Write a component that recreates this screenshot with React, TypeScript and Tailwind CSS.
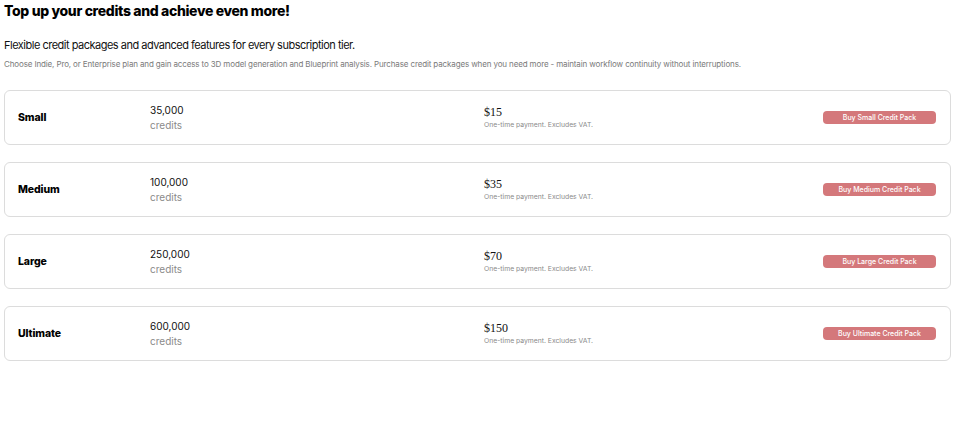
import React from "react";

const packs = [
  { name: "Small", credits: "35,000", price: "$15" },
  { name: "Medium", credits: "100,000", price: "$35" },
  { name: "Large", credits: "250,000", price: "$70" },
  { name: "Ultimate", credits: "600,000", price: "$150" },
];

export default function App() {
  return (
    <div
      className="w-[960px] h-[432px] bg-white text-black px-[4px] pt-[1px]"
      style={{ fontFamily: "Inter, 'Noto Sans', sans-serif" }}
    >
      <h1 className="text-[14px] font-extrabold leading-[20px] tracking-[-0.35px]">
        Top up your credits and achieve even more!
      </h1>
      <p className="mt-[17px] text-[11px] leading-[14px] tracking-[-0.5px] text-[#111]">
        Flexible credit packages and advanced features for every subscription tier.
      </p>
      <p className="mt-[6px] text-[8px] leading-[12px] tracking-[-0.13px] text-[#7a7a7a]">
        Choose Indie, Pro, or Enterprise plan and gain access to 3D model generation and Blueprint analysis. Purchase credit packages when you need more - maintain workflow continuity without interruptions.
      </p>
      <div className="mt-[20px] flex flex-col gap-[17px] w-[947px]">
        {packs.map((p) => (
          <div
            key={p.name}
            className="h-[55px] border border-[#dcdcdc] rounded-[6px] flex items-center pl-[13px] pr-[14px]"
          >
            <div className="w-[132px] text-[10.5px] font-extrabold tracking-[-0.1px]">{p.name}</div>
            <div className="w-[334px] flex flex-col">
              <span className="text-[10px] leading-[15px] text-[#111]">{p.credits}</span>
              <span className="text-[10px] leading-[15px] text-[#8a8a8a]">credits</span>
            </div>
            <div className="flex-1 flex flex-col pt-[1px]">
              <span
                className="text-[12px] leading-[13px] text-[#111]"
                style={{ fontFamily: "'Liberation Serif', serif" }}
              >
                {p.price}
              </span>
              <span className="text-[6.8px] leading-[11px] text-[#8a8a8a]">One-time payment. Excludes VAT.</span>
            </div>
            <button className="w-[113px] h-[13px] rounded-[4px] bg-[#d4787b] text-white text-[7px] font-medium leading-[13px] text-center">
              Buy {p.name} Credit Pack
            </button>
          </div>
        ))}
      </div>
    </div>
  );
}
